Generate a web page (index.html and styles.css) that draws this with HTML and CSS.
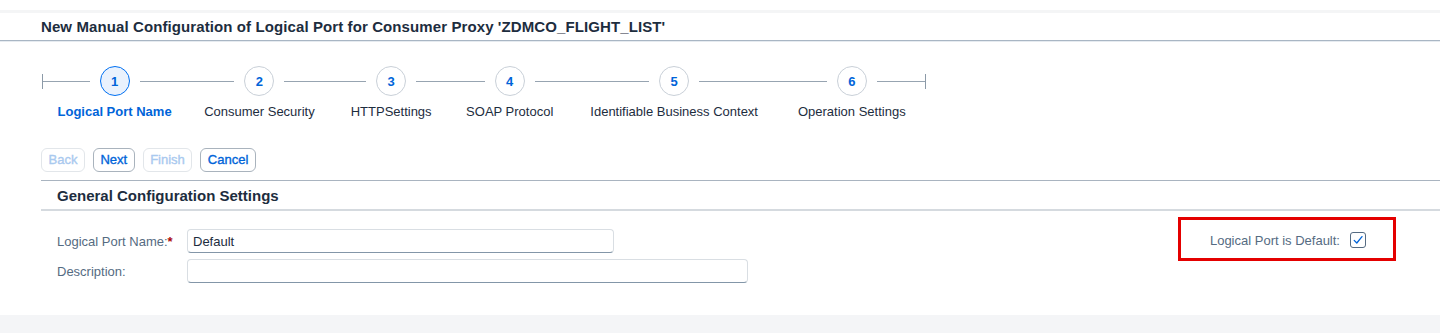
FILE: index.html
```html
<!DOCTYPE html>
<html lang="en">
<head>
<meta charset="utf-8">
<title>New Manual Configuration of Logical Port</title>
<link rel="stylesheet" href="styles.css">
</head>
<body>
<div class="page">
  <div class="topshade"></div>
  <header class="titlebar">
    <h1 class="title">New Manual Configuration of Logical Port for Consumer Proxy 'ZDMCO_FLIGHT_LIST'</h1>
  </header>

  <nav class="stepper">
    <span class="tick"></span>
    <div class="step active">
      <div class="track"><span class="circle">1</span></div>
      <div class="label">Logical Port Name</div>
    </div>
    <div class="step">
      <div class="track"><span class="circle">2</span></div>
      <div class="label">Consumer Security</div>
    </div>
    <div class="step">
      <div class="track"><span class="circle">3</span></div>
      <div class="label">HTTPSettings</div>
    </div>
    <div class="step step-soap">
      <div class="track"><span class="circle">4</span></div>
      <div class="label">SOAP Protocol</div>
    </div>
    <div class="step step-context">
      <div class="track"><span class="circle">5</span></div>
      <div class="label">Identifiable Business Context</div>
    </div>
    <div class="step step-ops">
      <div class="track"><span class="circle">6</span></div>
      <div class="label">Operation Settings</div>
    </div>
    <span class="tick"></span>
  </nav>

  <div class="actions">
    <button class="btn" disabled>Back</button>
    <button class="btn">Next</button>
    <button class="btn" disabled>Finish</button>
    <button class="btn">Cancel</button>
  </div>

  <section class="panel">
    <h2 class="panel-title">General Configuration Settings</h2>
    <div class="form">
      <div class="fields">
        <div class="row">
          <label class="field-label">Logical Port Name:<span class="req">*</span></label>
          <div class="input input-name">Default</div>
        </div>
        <div class="row">
          <label class="field-label">Description:</label>
          <div class="input input-desc"></div>
        </div>
      </div>
      <div class="highlight">
        <span class="field-label">Logical Port is Default:</span>
        <span class="checkbox">
          <svg width="12" height="12" viewBox="0 0 12 12"><path d="M2.2 6.4 L4.8 9 L10 2.6" fill="none" stroke="#0064d9" stroke-width="1.3" stroke-linecap="round" stroke-linejoin="round"/></svg>
        </span>
      </div>
    </div>
  </section>
  <div class="footer-band"></div>
</div>
</body>
</html>
```

FILE: styles.css
```css
* { box-sizing: border-box; }

html, body {
  margin: 0;
  padding: 0;
  background: #ffffff;
}

body {
  font-family: "Liberation Sans", Arial, sans-serif;
  color: #1d2d3e;
  font-size: 13px;
}

.page {
  width: 1440px;
  height: 333px;
  overflow: hidden;
}

.topshade {
  margin-top: 10px;
  height: 3px;
  background: #f4f5f6;
}

.titlebar {
  height: 28px;
  padding-left: 41px;
  display: flex;
  align-items: center;
  border-bottom: 1px solid #a9b6c4;
  box-shadow: 0 1px 0 #e6ebf0;
}

.title {
  margin: 0;
  font-size: 15px;
  font-weight: bold;
  letter-spacing: 0.1px;
  color: #1d2d3e;
  line-height: 18px;
}

/* Stepper */
.stepper {
  display: flex;
  align-items: flex-start;
  padding-left: 42px;
  margin-top: 25px;
}

.tick {
  width: 1px;
  height: 15px;
  margin-top: 8px;
  background: #8c9aa8;
}

.step {
  display: flex;
  flex-direction: column;
  align-items: stretch;
}

.track {
  display: flex;
  align-items: center;
  height: 30px;
}

.track::before,
.track::after {
  content: "";
  flex: 1;
  height: 1px;
  background: #97a4b1;
}

.circle {
  width: 30px;
  height: 30px;
  margin: 0 10px;
  border-radius: 50%;
  border: 1px solid #c9d0d8;
  background: #ffffff;
  color: #0064d9;
  font-weight: bold;
  font-size: 13px;
  display: flex;
  align-items: center;
  justify-content: center;
}

.step.active .circle {
  border-color: #0070f2;
  background: #eaf2fd;
}

.label {
  margin-top: 8px;
  padding: 0 18px;
  text-align: center;
  white-space: nowrap;
  line-height: 16px;
  font-size: 13px;
  color: #1d2d3e;
}

.step.active .label {
  padding: 0 14.5px;
  color: #0064d9;
  font-weight: bold;
}

.step-soap .label { padding: 0 16.5px; }
.step-context .label { padding: 0 20.5px; }
.step-ops .label { padding: 0 19.5px; }

/* Actions */
.actions {
  display: flex;
  gap: 8px;
  padding-left: 41px;
  margin-top: 28px;
}

.btn {
  height: 24px;
  padding: 0 6.5px;
  border: 1px solid #a9b3bd;
  border-radius: 6px;
  background: #ffffff;
  color: #0064d9;
  font-family: "Liberation Sans", Arial, sans-serif;
  font-size: 13px;
  font-weight: normal;
  -webkit-text-stroke: 0.35px #0064d9;
  line-height: 22px;
}

.btn:disabled {
  border-color: #e2e6ea;
  color: #a9c9ef;
  -webkit-text-stroke: 0.35px #a9c9ef;
}

/* Panel */
.panel {
  margin-top: 8px;
  margin-left: 41px;
  border-top: 1px solid #a9b4c0;
  height: 135px;
}

.panel-title {
  margin: 0;
  height: 30px;
  padding-left: 16px;
  display: flex;
  align-items: center;
  font-size: 15px;
  font-weight: bold;
  color: #1d2d3e;
  border-bottom: 2px solid #d5dadf;
}

.form {
  display: flex;
  align-items: flex-start;
  padding-top: 6px;
}

.fields {
  display: flex;
  flex-direction: column;
  gap: 6px;
  margin-top: 12px;
  padding-left: 16px;
}

.row {
  display: flex;
  align-items: center;
  height: 24px;
}

.field-label {
  width: 130px;
  color: #556b82;
  font-size: 13px;
  white-space: nowrap;
}

.req {
  color: #aa0808;
  font-weight: bold;
}

.input {
  height: 24px;
  border: 1px solid #d9dee3;
  border-bottom: 1.5px solid #8396a8;
  border-radius: 4px;
  background: #ffffff;
  padding: 0 5px;
  display: flex;
  align-items: center;
  font-size: 13px;
  color: #1d2d3e;
}

.input-name { width: 427px; }
.input-desc { width: 561px; }

.highlight {
  margin-left: auto;
  margin-right: 44px;
  width: 218px;
  height: 44px;
  border: 3px solid #e40000;
  display: flex;
  align-items: center;
  justify-content: flex-end;
  gap: 10px;
  padding: 2px 27px 0 0;
}

.highlight .field-label {
  width: auto;
}

.checkbox {
  width: 16px;
  height: 16px;
  border: 1px solid #556b82;
  border-radius: 3px;
  display: flex;
  align-items: center;
  justify-content: center;
}

.footer-band {
  height: 18px;
  background: #f4f5f7;
}
```
